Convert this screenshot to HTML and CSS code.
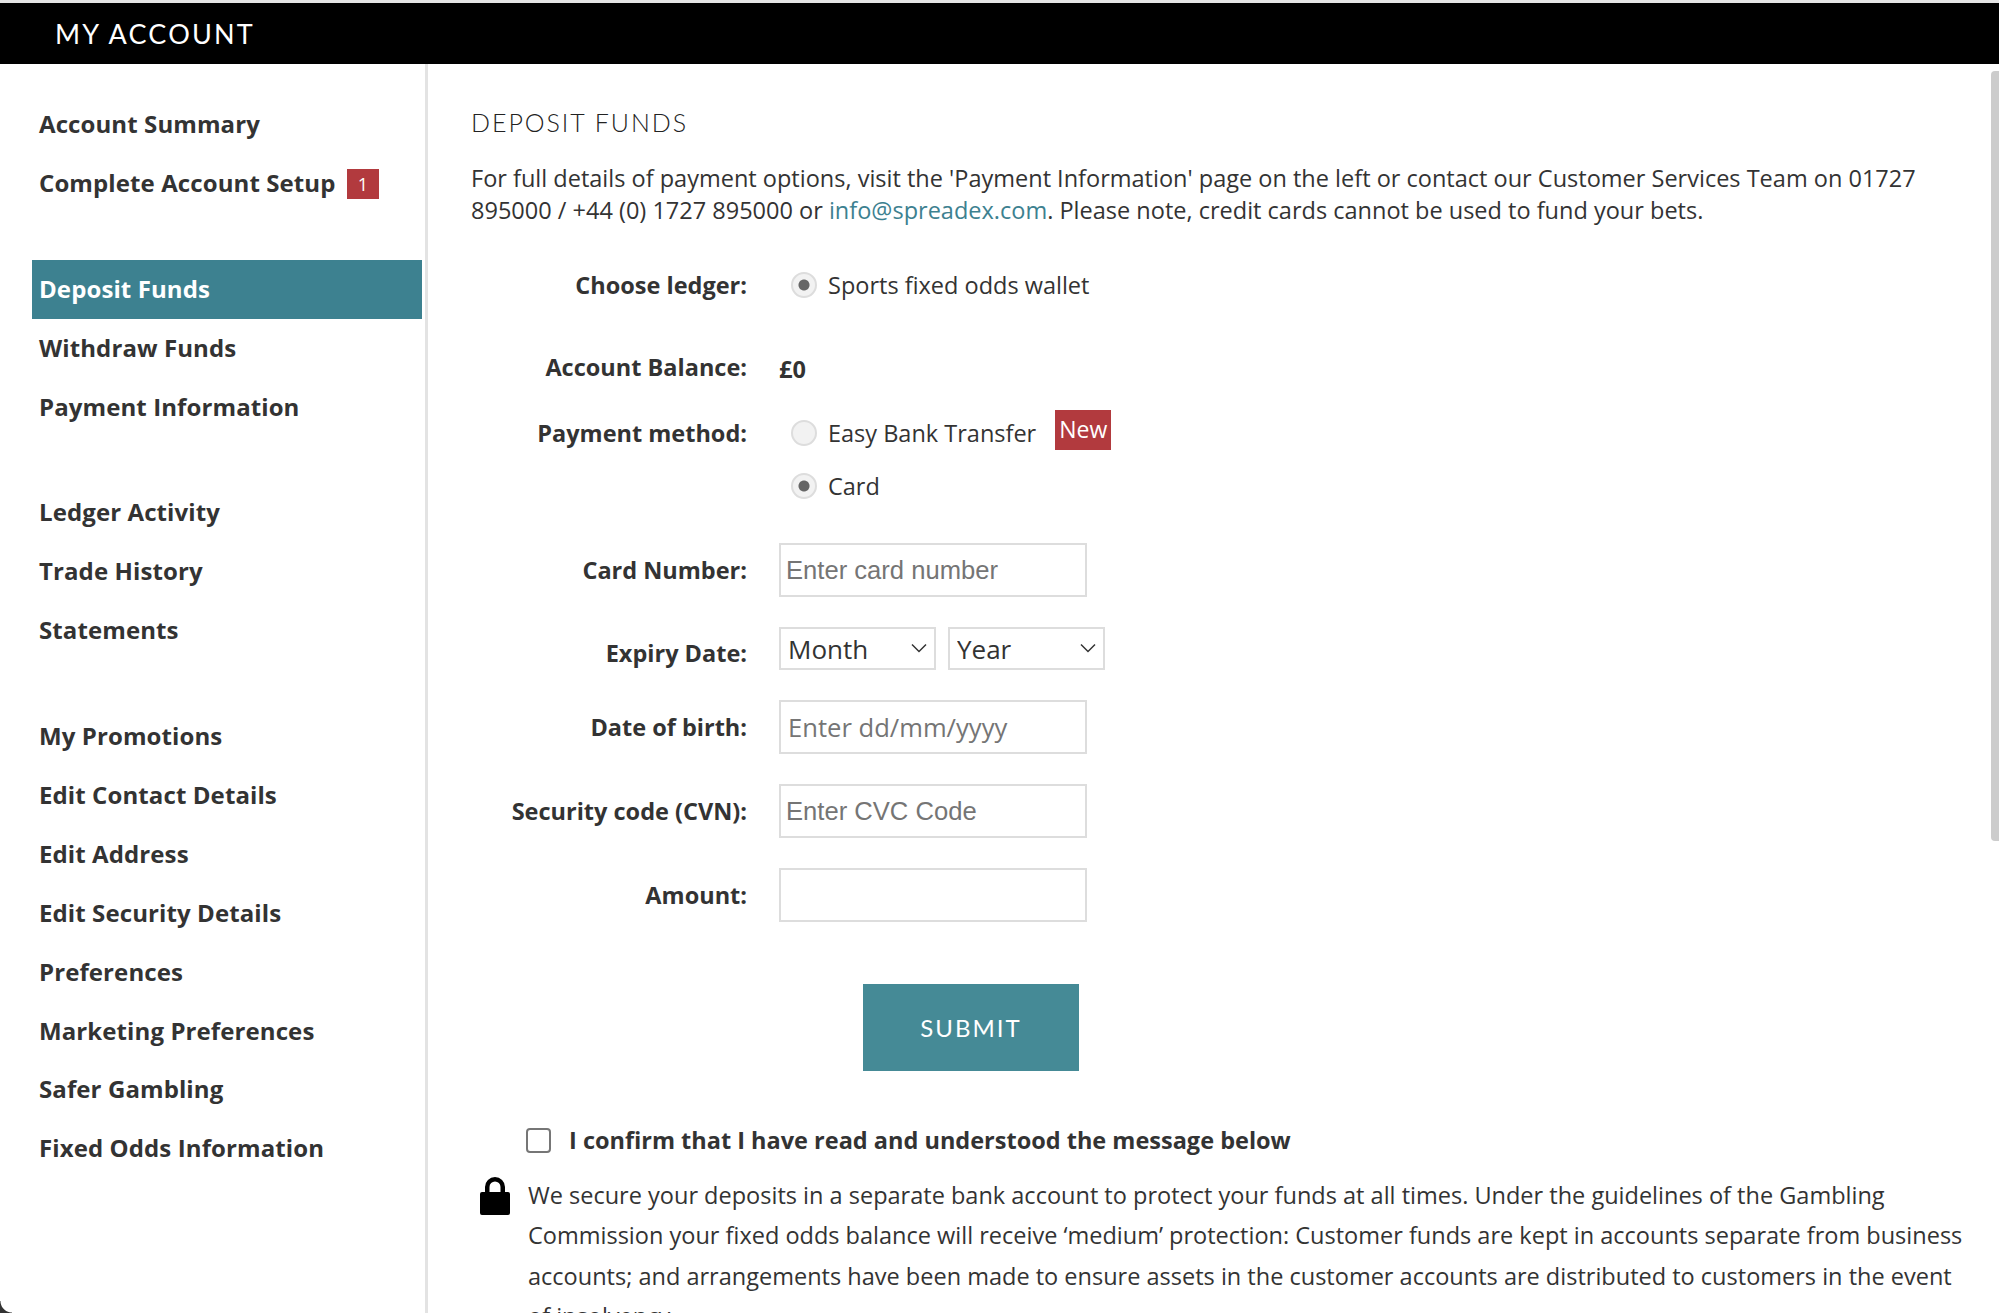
FILE: index.html
```html
<!DOCTYPE html>
<html lang="en">
<head>
    <meta charset="UTF-8">
    <title>My Account - Deposit Funds</title>
    <link rel="stylesheet" href="styles.css">
</head>
<body>
    <div class="page">
        <header class="top-bar">MY ACCOUNT</header>

        <div class="layout">
            <nav class="sidebar">
                <ul class="nav-group">
                    <li>Account Summary</li>
                    <li>Complete Account Setup <span class="count-badge">1</span></li>
                </ul>
                <ul class="nav-group">
                    <li class="active">Deposit Funds</li>
                    <li>Withdraw Funds</li>
                    <li>Payment Information</li>
                </ul>
                <ul class="nav-group">
                    <li>Ledger Activity</li>
                    <li>Trade History</li>
                    <li>Statements</li>
                </ul>
                <ul class="nav-group">
                    <li>My Promotions</li>
                    <li>Edit Contact Details</li>
                    <li>Edit Address</li>
                    <li>Edit Security Details</li>
                    <li>Preferences</li>
                    <li>Marketing Preferences</li>
                    <li>Safer Gambling</li>
                    <li>Fixed Odds Information</li>
                </ul>
            </nav>

            <main class="content">
                <h2 class="page-title">DEPOSIT FUNDS</h2>
                <p class="intro">For full details of payment options, visit the 'Payment Information' page on the left or contact our Customer Services Team on 01727 895000 / +44 (0) 1727 895000 or <a href="#">info@spreadex.com</a>. Please note, credit cards cannot be used to fund your bets.</p>

                <form class="deposit-form">
                    <div class="row row-ledger">
                        <label class="row-label">Choose ledger:</label>
                        <label class="radio"><input type="radio" name="ledger" checked> Sports fixed odds wallet</label>
                    </div>
                    <div class="row row-balance">
                        <span class="row-label">Account Balance:</span>
                        <strong class="balance">£0</strong>
                    </div>
                    <div class="row row-method">
                        <span class="row-label">Payment method:</span>
                        <div class="radio-stack">
                            <label class="radio"><input type="radio" name="method"> Easy Bank Transfer <span class="new-badge">New</span></label>
                            <label class="radio"><input type="radio" name="method" checked> Card</label>
                        </div>
                    </div>
                    <div class="row row-field">
                        <label class="row-label">Card Number:</label>
                        <input class="text-input arial" type="text" placeholder="Enter card number">
                    </div>
                    <div class="row row-expiry">
                        <label class="row-label">Expiry Date:</label>
                        <div class="select-wrap">
                            <select><option>Month</option></select>
                            <svg viewBox="0 0 16 10"><path d="M1 1.500l7 7 7-7" fill="none" stroke="#333" stroke-width="1.500"/></svg>
                        </div>
                        <div class="select-wrap">
                            <select><option>Year</option></select>
                            <svg viewBox="0 0 16 10"><path d="M1 1.500l7 7 7-7" fill="none" stroke="#333" stroke-width="1.500"/></svg>
                        </div>
                    </div>
                    <div class="row row-field">
                        <label class="row-label">Date of birth:</label>
                        <input class="text-input" type="text" placeholder="Enter dd/mm/yyyy">
                    </div>
                    <div class="row row-field">
                        <label class="row-label">Security code (CVN):</label>
                        <input class="text-input arial" type="text" placeholder="Enter CVC Code">
                    </div>
                    <div class="row row-field">
                        <label class="row-label">Amount:</label>
                        <input class="text-input" type="text">
                    </div>
                    <button class="submit-btn" type="button">SUBMIT</button>
                </form>

                <label class="confirm"><input type="checkbox"> I confirm that I have read and understood the message below</label>

                <div class="secure-note">
                    <svg class="lock" viewBox="0 0 32 38"><path d="M3 15h3V10a10 10 0 0 1 20 0v5h3a2 2 0 0 1 2 2v19a2 2 0 0 1-2 2H3a2 2 0 0 1-2-2V17a2 2 0 0 1 2-2zM10.500 15h11V10a5.500 5.500 0 0 0-11 0z"/></svg>
                    <p>We secure your deposits in a separate bank account to protect your funds at all times. Under the guidelines of the Gambling Commission your fixed odds balance will receive ‘medium’ protection: Customer funds are kept in accounts separate from business accounts; and arrangements have been made to ensure assets in the customer accounts are distributed to customers in the event of insolvency.</p>
                </div>
            </main>
        </div>

        <div class="scroll-thumb"></div>
        <div class="corner"></div>
    </div>
</body>
</html>
```

FILE: styles.css
```css
* {
    margin: 0;
    padding: 0;
    box-sizing: border-box;
}

html, body {
    height: 100%;
    overflow: hidden;
}

body {
    font-family: 'Open Sans', 'Liberation Sans', sans-serif;
    color: #333;
    background: white;
}

.page {
    position: relative;
    height: 1313px;
    overflow: hidden;
    border-top: 3px solid #e4e4e4;
    background: white;
}

.top-bar {
    height: 61px;
    background: black;
    color: white;
    font-family: 'Lato', 'Open Sans', sans-serif;
    font-size: 27px;
    letter-spacing: 2.200px;
    line-height: 61px;
    padding-left: 55px;
}

.layout {
    display: flex;
    height: 1249px;
}

/* left menu */
.sidebar {
    width: 428px;
    flex-shrink: 0;
    border-right: 3px solid #e3e3e3;
    padding: 31px 3px 0 32px;
}

.nav-group {
    list-style: none;
    margin-bottom: 47px;
}

.nav-group li {
    height: 58.900px;
    line-height: 58.900px;
    padding-left: 7px;
    font-size: 24px;
    font-weight: 700;
    letter-spacing: 0.100px;
    color: #333;
}

.nav-group li.active {
    background: #3d8190;
    color: white;
}

.count-badge {
    display: inline-block;
    width: 32px;
    height: 30px;
    margin-left: 5px;
    background: #b23a3e;
    color: white;
    font-size: 18px;
    font-weight: 400;
    line-height: 30px;
    text-align: center;
    vertical-align: 1px;
}

/* main column */
.content {
    flex: 1;
    padding: 43px 34px 0 43px;
}

.page-title {
    font-family: 'Lato', 'Open Sans', sans-serif;
    font-size: 25px;
    font-weight: 300;
    letter-spacing: 1.950px;
    line-height: 30px;
    color: #222;
}

.intro {
    margin-top: 25px;
    font-size: 23.530px;
    line-height: 32px;
}

.intro a {
    color: #3d8190;
    text-decoration: none;
}

.row {
    display: flex;
    align-items: center;
}

.row-label {
    width: 276px;
    margin-right: 32px;
    text-align: right;
    font-size: 23.500px;
    font-weight: 700;
    flex-shrink: 0;
}

.row-ledger {
    margin-top: 43px;
    height: 32px;
}

.row-balance {
    margin-top: 50px;
    height: 32px;
}

.balance {
    font-size: 23.500px;
    padding-top: 3px;
}

.row-method {
    margin-top: 34px;
    align-items: flex-start;
}

.radio-stack {
    display: flex;
    flex-direction: column;
    gap: 21px;
}

.radio {
    display: flex;
    align-items: center;
    height: 32px;
    font-size: 23.500px;
    margin-left: 12px;
}

.radio input {
    appearance: none;
    width: 26px;
    height: 26px;
    margin-right: 11px;
    border: 2px solid #ddd;
    border-radius: 50%;
    background: #f2f2f2;
}

.radio input:checked {
    background: radial-gradient(circle, #666 0, #666 5px, #f2f2f2 6px);
}

.new-badge {
    display: inline-block;
    width: 56px;
    height: 40px;
    margin-left: 19px;
    margin-top: -6px;
    background: #b23a3e;
    color: white;
    font-size: 23px;
    line-height: 38px;
    text-align: center;
}

.row-field {
    margin-top: 30px;
    height: 54px;
}

.row-method + .row-field {
    margin-top: 41px;
}

.text-input {
    width: 308px;
    height: 54px;
    border: 2px solid #ddd;
    background: white;
    padding-left: 7px;
    font-family: 'Open Sans', sans-serif;
    font-size: 25.600px;
    color: #333;
}

.text-input::placeholder {
    color: #757575;
    opacity: 1;
}

.text-input.arial {
    font-family: 'Liberation Sans', sans-serif;
    padding-left: 5px;
}

.row-expiry {
    margin-top: 30px;
    height: 43px;
}

.row-expiry .row-label {
    position: relative;
    top: 4px;
}

.select-wrap {
    position: relative;
    width: 157px;
    height: 43px;
    margin-right: 12px;
}

.select-wrap select {
    appearance: none;
    width: 100%;
    height: 100%;
    border: 2px solid #ddd;
    border-radius: 0;
    background: white;
    padding-left: 7px;
    font-family: 'Open Sans', sans-serif;
    font-size: 26px;
    color: #333;
}

.select-wrap svg {
    position: absolute;
    right: 9px;
    top: 16px;
    width: 16px;
    height: 10px;
    pointer-events: none;
}

.submit-btn {
    display: block;
    width: 216px;
    height: 87px;
    margin: 62px 0 0 392px;
    border: none;
    background: #458a96;
    color: white;
    font-family: 'Lato', 'Open Sans', sans-serif;
    font-size: 24px;
    letter-spacing: 2px;
}

.confirm {
    display: flex;
    align-items: center;
    margin: 53px 0 0 55px;
    height: 32px;
    font-size: 23.500px;
    font-weight: 700;
}

.confirm input {
    appearance: none;
    width: 25px;
    height: 25px;
    margin-right: 18px;
    border: 2px solid #767676;
    border-radius: 4px;
    background: white;
}

.secure-note {
    display: flex;
    align-items: flex-start;
    margin: 19px 0 0 8px;
}

.lock {
    width: 32px;
    height: 38px;
    flex-shrink: 0;
    margin: 2px 17px 0 0;
    fill: black;
}

.secure-note p {
    font-size: 23.530px;
    line-height: 40.300px;
}

/* overlays */
.scroll-thumb {
    position: absolute;
    top: 68px;
    right: 0;
    width: 8px;
    height: 770px;
    background: #ccc;
    border-radius: 4px 0 0 4px;
}

.corner {
    position: absolute;
    left: -20px;
    bottom: -20px;
    width: 32px;
    height: 32px;
    background: radial-gradient(circle at 100% 0, transparent 11px, #333 12px);
}
```
